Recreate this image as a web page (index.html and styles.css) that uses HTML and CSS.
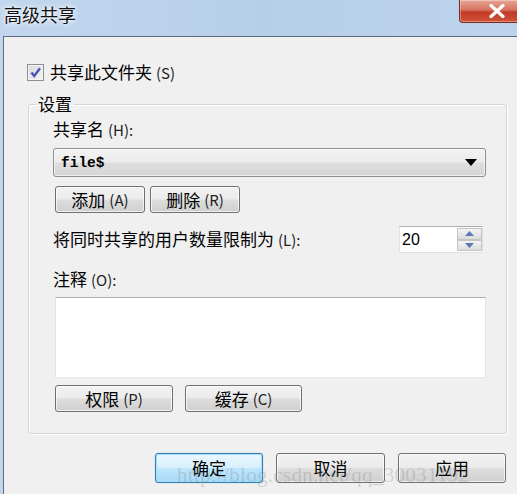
FILE: index.html
```html
<!DOCTYPE html>
<html lang="zh-CN">
<head>
<meta charset="utf-8">
<title>高级共享</title>
<link rel="stylesheet" href="styles.css">
</head>
<body>
<div class="window">
  <div class="titlebar">
    <span class="title">高级共享</span>
    <div class="close">
      <svg width="18" height="14" viewBox="0 0 18 14"><path d="M3 1.5 L15 12.5 M15 1.5 L3 12.5" stroke="#fff" stroke-width="3.2" stroke-linecap="round"/></svg>
    </div>
  </div>
  <div class="client">
    <div class="check-row">
      <span class="checkbox">
        <svg width="13" height="13" viewBox="0 0 13 13"><path d="M2.5 6.5 L5.2 10 L11 2.2" fill="none" stroke="#4a55b0" stroke-width="2.4"/></svg>
      </span>
      <span class="txt">共享此文件夹<span class="key">(S)</span></span>
    </div>
    <fieldset class="group">
      <legend class="legend">设置</legend>
      <div class="label">共享名<span class="key">(H):</span></div>
      <div class="select">
        <span class="select-val">file$</span>
        <svg class="select-arrow" width="12" height="7" viewBox="0 0 12 7"><path d="M0 0 H12 L6 7 Z" fill="#000"/></svg>
      </div>
      <div class="btn-row gap5">
        <div class="btn w90">添加<span class="key">(A)</span></div>
        <div class="btn w90">删除<span class="key">(R)</span></div>
      </div>
      <div class="limit-row">
        <span class="txt">将同时共享的用户数量限制为<span class="key">(L):</span></span>
        <div class="spin">
          <span class="spin-val">20</span>
          <div class="spin-btns">
            <div class="spin-btn"><svg width="9" height="5" viewBox="0 0 9 5"><path d="M0 5 L4.5 0 L9 5 Z" fill="#5b78b8"/></svg></div>
            <div class="spin-btn"><svg width="9" height="5" viewBox="0 0 9 5"><path d="M0 0 H9 L4.5 5 Z" fill="#5b78b8"/></svg></div>
          </div>
        </div>
      </div>
      <div class="label label2">注释<span class="key">(O):</span></div>
      <div class="textarea"></div>
      <div class="btn-row gap12 row2">
        <div class="btn w118">权限<span class="key">(P)</span></div>
        <div class="btn w117">缓存<span class="key">(C)</span></div>
      </div>
    </fieldset>
    <div class="footer">
      <div class="btn big default">确定</div>
      <div class="btn big w109">取消</div>
      <div class="btn big">应用</div>
      <span class="watermark">http://blog.csdn.net/qq_30031192</span>
    </div>
  </div>
</div>
</body>
</html>
```
FILE: styles.css
```css
* { box-sizing: border-box; }
html, body {
  margin: 0;
  padding: 0;
  width: 517px;
  height: 494px;
  overflow: hidden;
}
body {
  font-family: "Noto Sans CJK SC", "Liberation Sans", sans-serif;
  font-size: 17px;
  color: #000;
}
.window {
  width: 517px;
  height: 494px;
  background: linear-gradient(90deg, #c2d7ee 0%, #b6cfe9 50%, #bcd3ec 100%);
  display: flex;
  flex-direction: column;
  overflow: hidden;
}
.titlebar {
  height: 36px;
  flex: none;
  display: flex;
  align-items: flex-start;
  padding-left: 4px;
}
.title {
  font-size: 18px;
  line-height: 22px;
  padding-top: 3px;
  color: #111;
  text-shadow: 0 0 6px #fff, 0 0 3px #fff;
}
.close {
  margin-left: auto;
  margin-right: -17px;
  width: 75px;
  height: 23px;
  border: 1px solid #7a2a20;
  border-top: none;
  border-radius: 0 0 4px 4px;
  background: linear-gradient(180deg, #e8a596 0%, #d6735f 45%, #c13b25 55%, #d0523a 100%);
  display: flex;
  align-items: center;
  justify-content: center;
  box-shadow: inset 0 0 0 1px rgba(255,255,255,0.35);
}
.client {
  flex: 1;
  margin-left: 3px;
  border-top: 1px solid #5e6d7d;
  border-left: 1px solid #5e6d7d;
  background: #f0f0f0;
  padding-top: 25px;
  position: relative;
}
.key {
  font-size: 15px;
  margin-left: 4px;
  color: #222;
}
.check-row {
  display: flex;
  align-items: center;
  height: 20px;
  padding-left: 23px;
}
.checkbox {
  width: 17px;
  height: 17px;
  border: 1px solid #8e8f8f;
  background: linear-gradient(135deg, #d6d9de 0%, #f4f4f4 100%);
  box-shadow: inset 0 0 0 1px #f4f4f4;
  display: flex;
  align-items: center;
  justify-content: center;
  margin-right: 6px;
}
.txt {
  line-height: 20px;
  white-space: nowrap;
}
.group {
  margin: 12px 0 0 24px;
  width: 479px;
  border: 1px solid #d2d4d7;
  border-radius: 3px;
  box-shadow: inset 1px 1px 0 #fff, 1px 1px 0 #fff;
  padding: 5px 20px 21px 24px;
  min-width: 0;
}
.legend {
  padding: 0 2px;
  margin-left: -17px;
  line-height: 20px;
}
.label {
  line-height: 20px;
}
.select {
  margin-top: 8px;
  width: 433px;
  height: 29px;
  border: 1px solid #8e8f8f;
  border-radius: 3px;
  background: linear-gradient(180deg, #f3f3f3 0%, #ebebeb 48%, #dedede 52%, #d6d6d6 100%);
  box-shadow: inset 0 0 0 1px rgba(255,255,255,0.6);
  display: flex;
  align-items: center;
  padding: 0 8px 0 7px;
}
.select-val {
  font-family: "Liberation Mono", "DejaVu Sans Mono", monospace;
  font-weight: bold;
  font-size: 14.5px;
}
.select-arrow { margin-left: auto; }
.btn-row {
  display: flex;
  margin-top: 9px;
  padding-left: 2px;
}
.gap5 { gap: 5px; }
.gap12 { gap: 12px; }
.row2 { margin-top: 7px; }
.btn {
  height: 27px;
  border: 1px solid #707070;
  border-radius: 3px;
  background: linear-gradient(180deg, #f2f2f2 0%, #ebebeb 48%, #dddddd 52%, #cfcfcf 100%);
  box-shadow: inset 0 0 0 1px rgba(255,255,255,0.7);
  display: flex;
  align-items: center;
  justify-content: center;
  white-space: nowrap;
  line-height: 20px;
}
.w90 { width: 90px; }
.w118 { width: 118px; }
.w117 { width: 117px; }
.limit-row {
  display: flex;
  align-items: center;
  margin-top: 13px;
  height: 27px;
}
.spin {
  margin-left: auto;
  margin-right: 3px;
  width: 84px;
  height: 27px;
  display: flex;
  background: #fff;
  border: 1px solid #dde2e8;
  border-top-color: #abadb3;
}
.spin-val {
  flex: 1;
  font-family: "Liberation Sans", "Arial", sans-serif;
  font-size: 16px;
  line-height: 25px;
  padding-left: 2px;
}
.spin-btns {
  width: 25px;
  display: flex;
  flex-direction: column;
  padding: 1px 0 1px 0;
}
.spin-btn {
  flex: 1;
  display: flex;
  align-items: center;
  justify-content: center;
  background: linear-gradient(180deg, #f4f4f4, #dcdcdc);
  border: 1px solid #c4c4c4;
}
.label2 { margin-top: 16px; }
.textarea {
  margin-top: 7px;
  margin-left: 2px;
  width: 431px;
  height: 81px;
  background: #fff;
  border: 1px solid #e2e3ea;
  border-top-color: #abadb3;
  border-bottom-color: #e3e9ef;
}
.footer {
  display: flex;
  justify-content: flex-end;
  gap: 13px;
  margin-top: 19px;
  padding-right: 11px;
}
.big {
  width: 108px;
  height: 30px;
}
.w109 { width: 109px; }
.default {
  border-color: #3c7fb1;
  background: linear-gradient(180deg, #eaf6fd 0%, #d9f0fc 48%, #bee6fd 52%, #a7d9f5 100%);
  box-shadow: inset 0 0 0 1px #9fe1ff, 0 0 1px #48a6d8;
}
.watermark {
  position: absolute;
  left: 173px;
  top: 426px;
  font-family: "Liberation Serif", serif;
  font-size: 21px;
  letter-spacing: 0.3px;
  color: rgba(130, 130, 130, 0.28);
  white-space: nowrap;
  pointer-events: none;
}
```
